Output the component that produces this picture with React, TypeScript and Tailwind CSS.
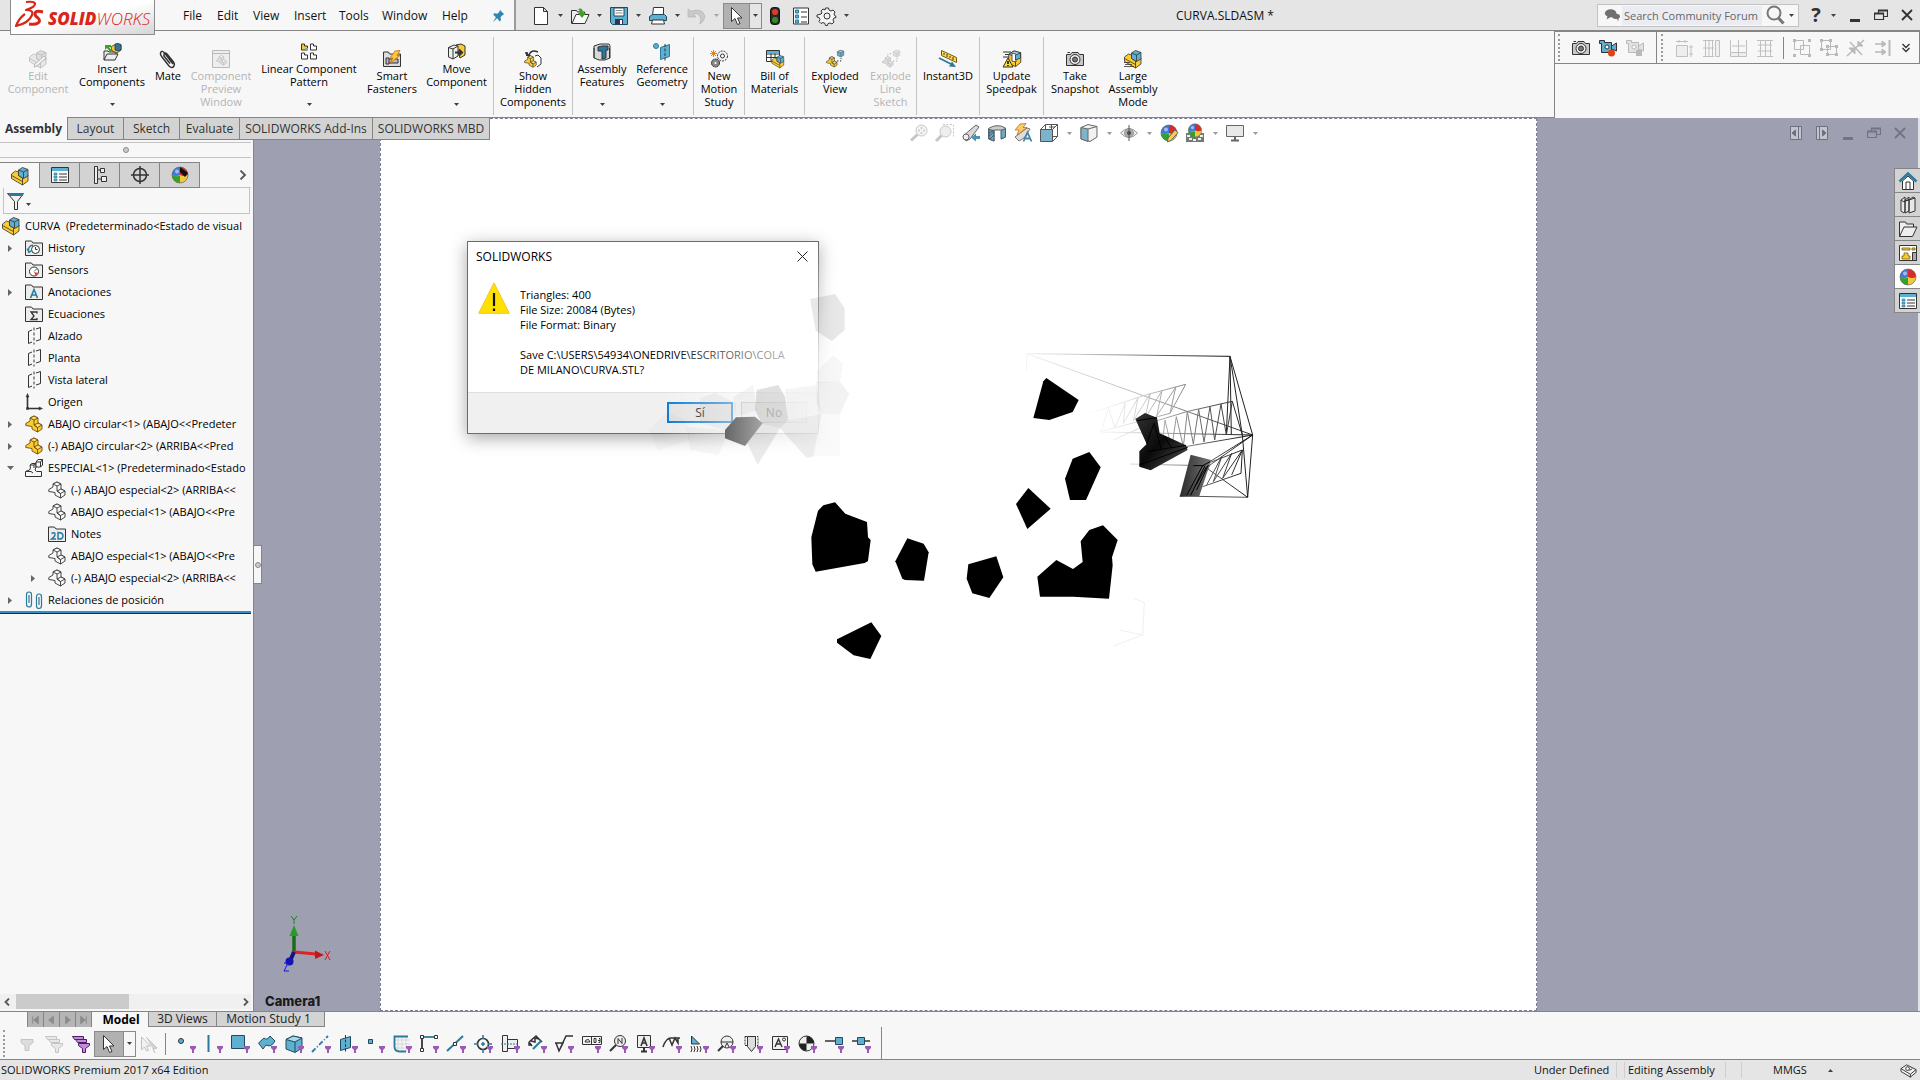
import type { ReactNode } from "react";

type IconProps = { name: string; className?: string };

const K = "#333333";
const B = "#2b7a9e";
const L = "#5fb0d0";
const Y = "#fbcb32";
const G = "#b9b9b9";

// Folder body shared by several tree icons
const folder = (
  <path d="M.5 16.500V2h6l1.500 2h9.500v12.500z" fill="#ededed" stroke={K} />
);

const partShape = (fill: string, light: string, stroke: string) => (
  <g stroke={stroke} strokeLinejoin="round" strokeWidth=".9">
    <path d="M.8 8.500L5 6V3l4-2 4 2v5l4 2v4l-4.500 3L7 14v-2.500L.8 10.500z" fill={fill} />
    <path d="M5 3l4 2 4-2L9 1zM9 10l4-2 4 2-4.500 2.500z" fill={light} />
    <path d="M9 5v5l3.500 2.500V17" fill="none" />
  </g>
);

const assemblyShape = (fill: string, cube: string, stroke: string) => (
  <g stroke={stroke} strokeLinejoin="round" strokeWidth=".8">
    <path d="M.5 7l4-3 3 1v3.500l4 2.500 5.500-3v6l-5.500 4L.5 11.500z" fill={fill} />
    <path d="M11.500 11v7M.5 8.500l11 6" fill="none" />
    <path d="M7.500 3l4-2.500 5.500 2V9l-4.500 2.500-5-3z" fill={cube} />
    <path d="M7.500 3l5 2 4.500-2.500M12.500 5v6.500" fill="none" />
  </g>
);

const cubeShape = (fill: string, light: string, stroke: string) => (
  <g stroke={stroke} strokeLinejoin="round">
    <path d="M1 4.500L8 1l9 2v10l-7 4.500L1 14z" fill={fill} />
    <path d="M1 4.500L10 7l7-4-9-2z" fill={light} />
    <path d="M10 7v10" />
  </g>
);

const cameraShape = (
  <g>
    <path d="M.5 4.500h4l1.500-2h6l1.500 2h4v11H.5z" fill="#c9c9c9" stroke={K} />
    <circle cx="9" cy="9.500" r="5" fill="#eee" stroke={K} />
    <circle cx="9" cy="9.500" r="2.500" fill="#777" stroke={K} />
    <path d="M1.500 2.500h2.500" stroke={K} />
  </g>
);

const ball = (
  <g>
    <circle cx="9" cy="9" r="8" fill="#f0c93c" />
    <path d="M9 9V1a8 8 0 0 0-8 8q4 2 8 0z" fill="#3f78dc" />
    <path d="M9 9V1a8 8 0 0 1 8 8q-4 2-8 0z" fill="#d92b2b" />
    <path d="M9 9.500V17a8 8 0 0 1-8-8q4 2 8 .5z" fill="#2ea32e" />
    <circle cx="9" cy="9" r="8" fill="none" stroke="#666" strokeWidth=".7" />
    <circle cx="6" cy="5.500" r="2" fill="#fff" opacity=".5" />
  </g>
);

const listShape = (
  <g>
    <path d="M.5 1.500h17v15H.5z" fill="#fff" stroke={K} />
    <path d="M1 2h16v3H1z" fill={L} />
    <path d="M3 7h3v2H3zM3 10h3v2H3zM3 13h3v2H3z" fill={L} stroke={B} strokeWidth=".6" />
    <path d="M8 8h8M8 11h8M8 14h8" stroke={K} />
  </g>
);

const cursorShape = (
  <path d="M3.500.5v14l3.500-3 2.500 6 2.500-1-2.500-5.500H14z" fill="#fff" stroke={K} strokeLinejoin="round" />
);

const videoShape = (body: string, stroke: string) => (
  <g stroke={stroke}>
    <path d="M.5 1.500h5v2h7v10h-10v-9h-2z" fill={body} />
    <path d="M12.500 7l5-3v8l-5-2z" fill={body} />
    <circle cx="8" cy="8" r="2" fill="#fff" />
  </g>
);

const funnelStack = (fill: string, stroke: string) => (
  <g fill={fill} stroke={stroke}>
    <path d="M.5 1.500h11v3h-9z" />
    <path d="M3.500 4.500h11v3h-9z" />
    <path d="M6.500 8.500h11v2l-4 3v4h-3v-4l-4-3z" />
  </g>
);

const icons: Record<string, ReactNode> = {
  newDoc: <path d="M2.500.5h9l4 4v13h-13zM11.500.5v4h4" fill="#fff" stroke={K} />,
  open: (
    <g>
      <path d="M.5 16.500V3.500h5l1 1.500h7v3" fill="#eee" stroke={K} />
      <path d="M1 16.500l4-9h13l-4 9z" fill="#fafafa" stroke={K} />
      <path d="M7 2q5-2 5 4h3l-4 5-4-5h2q0-3-2-4z" fill="#3fa31f" />
    </g>
  ),
  save: (
    <g>
      <path d="M.5.5h17v17h-15l-2-2z" fill={L} stroke="#1f4b60" />
      <path d="M4 1h10v8H4z" fill="#fff" stroke="#1f4b60" />
      <path d="M5.500 3.500h7M5.500 6h7" stroke="#888" />
      <path d="M5 12h8v5H5z" fill="#335" />
      <path d="M10 13h2v4h-2z" fill="#fff" />
    </g>
  ),
  print: (
    <g stroke={K}>
      <path d="M4.500.5h10v8h-11z" fill="#fff" />
      <path d="M.5 9.500l3-2h12l2 2v4H.5z" fill={L} stroke="#1f4b60" />
      <path d="M3.500 13h11l1 4h-13z" fill="#fff" />
    </g>
  ),
  undo: <path d="M0 2v8h8L5.500 7q8-2 7 8l-1 2q6-3 5-9Q14 1 3 4z" fill="#c9c9c9" stroke="#b0b0b0" strokeWidth=".6" />,
  cursor: cursorShape,
  traffic: (
    <g>
      <rect x="4.500" y=".5" width="9" height="17" rx="3" fill="#2b2b2b" stroke="#111" />
      <circle cx="9" cy="5" r="3" fill="#e23a24" />
      <circle cx="9" cy="13" r="3" fill="#2f8f22" />
    </g>
  ),
  options: (
    <g>
      <path d="M1.500 1h15v16h-15z" fill="#fff" stroke={K} />
      <path d="M3.500 3h3v3h-3zM3.500 8h3v3h-3zM3.500 13h3v3h-3z" fill={L} stroke={B} />
      <path d="M9 5h6M9 10h6M9 15h6" stroke={K} />
    </g>
  ),
  gear: (
    <g fill="#f4f4f4" stroke={K}>
      <path d="M7.500 1h3l.5 2 2 1 2-1 2 2-1 2 1 2 1 .5v1l-2 .5-1 2 1 2-2 2-2-1-2 .5-.5 2h-2l-.5-2-2-1-2 1-2-2 1-2-1-2-2-.5v-2L3 7l1-1-1-2 2-2 2 1z" />
      <circle cx="9" cy="9" r="3" />
    </g>
  ),
  editComp: (
    <g>
      {assemblyShape("#e8e8e8", "#ddd", G)}
      <path d="M6 14L15 6l2 2-9 8-3 1z" fill="#f3f3f3" stroke={G} />
    </g>
  ),
  insert: (
    <g>
      <path d="M1 17V8h4l1 1h7v2M1 17l3-6h11l-3 6z" fill="#eee" stroke={K} />
      <path d="M2 2h6v2H6l3 4-2 1-3-4-2 2z" fill="#3fa31f" />
      <path d="M8 4l3-2 4-1 3 1v5l-4 3-5-2z" fill={Y} stroke={K} strokeWidth=".8" />
      <path d="M12 1l3-.5 3 1V7l-3 1-3-1z" fill={B} stroke={K} strokeWidth=".8" />
    </g>
  ),
  mate: (
    <path
      d="M14 14L6 3.500Q3-.5 1.500 3 1 5 3 7l7 9q3 3 5 0 1-2-.5-4L8 4Q6 2 5 4l0 2 6 7.500"
      fill="none"
      stroke={K}
      strokeWidth="1.500"
    />
  ),
  preview: (
    <g stroke={G}>
      <path d="M.5.500h17v17H.5z" fill="#eee" />
      <path d="M.5 3.500h17" />
      <g transform="translate(4 5) scale(.6)">{partShape("#ddd", "#f5f5f5", G)}</g>
    </g>
  ),
  pattern: (
    <g stroke={K} fill="#fff">
      <path d="M1.500 1h3v2h3v4h-6z" fill={Y} />
      <path d="M10.500 1h3v2h3v4h-6zM1.500 10h3v2h3v4h-6zM10.500 10h3v2h3v4h-6z" />
      <path d="M5 5h3v2H5z" fill={L} stroke="none" />
    </g>
  ),
  smart: (
    <g>
      <path d="M.5 16.500V2h5l1 2h11v12.500z" fill="#ddd" stroke={K} />
      <path d="M3 8h3v6H3zM6 9h9v4H6" fill="#bbb" stroke={K} />
      <path d="M12 1l5-.5-3 5h3L7 13l3-5H7z" fill={Y} stroke="#d06a10" strokeWidth=".8" />
    </g>
  ),
  move: (
    <g stroke={K}>
      <path d="M8 2l5-1 4 2v9l-5 3z" fill={Y} />
      <path d="M.5 4.500L6 2l4 1v10l-5 3-4.500-2z" fill="#eee" />
      <path d="M.5 4.500L5 6l5-3M5 6v10" fill="none" />
      <path d="M7 9.500h6M11 6.500l3 3-3 3" strokeWidth="2" fill="none" />
    </g>
  ),
  showHidden: (
    <g>
      <path d="M1 3h3M14 2q-7-3-9 3" fill="none" stroke={K} strokeWidth="1.500" />
      <path d="M2 2v4h5z" fill={K} />
      <path d="M11 6l3-1 3 3v6l-4 3" fill="#fff" stroke={K} />
      <g transform="translate(0 5) scale(.72)">{partShape(Y, "#ffdf6e", K)}</g>
    </g>
  ),
  asmFeature: (
    <g stroke={K}>
      <path d="M1 3l6-2h9l1 2v12l-5 2H6l-5-2z" fill="#d8d8d8" />
      <path d="M5 4l4-1h6v4h-2v8l-4 1V8H5z" fill={B} />
      <path d="M1 5v10M16.500 5v10" />
    </g>
  ),
  refGeom: (
    <g>
      <circle cx="3" cy="3" r="2.500" fill={L} stroke={B} />
      <path d="M7.500 4.500l9-3v12l-9 3z" fill={L} stroke={B} />
      <path d="M12 1v17" stroke={K} strokeDasharray="3 1.500" />
    </g>
  ),
  motion: (
    <g>
      <path d="M3.500 0v7M0 3.500h7M1 1l5 5M6 1L1 6" stroke="#e0801e" />
      <circle cx="12.500" cy="6" r="5" fill="#f4f4f4" stroke={K} strokeDasharray="2 1" />
      <circle cx="12.500" cy="6" r="2" fill="#fff" stroke={K} />
      <circle cx="5.500" cy="13" r="4" fill="#888" stroke={K} strokeDasharray="2 .5" />
      <circle cx="5.500" cy="13" r="1" fill="#fff" />
    </g>
  ),
  bom: (
    <g>
      <path d="M.5.500h13v11H.5zM.5 4h13M.5 7.500h13M5 1v10M9 1v10" fill="#fff" stroke={K} />
      <path d="M1 1h12v2.500H1z" fill={L} />
      <g transform="translate(5.500 5) scale(.72)">{assemblyShape(Y, L, K)}</g>
    </g>
  ),
  exploded: (
    <g>
      <g transform="translate(0 6) scale(.65)">{partShape(Y, "#ffdf6e", K)}</g>
      <g transform="translate(11 0) scale(.4)">{cubeShape(L, "#a7d9ea", K)}</g>
      <path d="M11 11h4V8" fill="none" stroke={K} strokeDasharray="1.500 1.500" />
    </g>
  ),
  explodeLine: (
    <g>
      <g transform="translate(0 6) scale(.65)">{partShape("#ddd", "#eee", G)}</g>
      <g transform="translate(11 0) scale(.4)">{cubeShape("#ddd", "#eee", G)}</g>
      <path d="M11 11h4V8M5 5l5-2" fill="none" stroke={G} strokeDasharray="1.500 1.500" />
    </g>
  ),
  instant: (
    <g>
      <path d="M2.500.5l15 7v5l-15-7z" fill="#ffd94f" stroke="#7a5a10" />
      <path d="M5 3v2M8 4v3M11 6v2M14 7v3" stroke={K} />
      <path d="M0 8l12 6" stroke={B} strokeWidth="1.800" />
      <path d="M17 17l-7-.5 3-5z" fill={B} />
    </g>
  ),
  speedpak: (
    <g>
      <path d="M0 2h8M2 4.500h6M0 7h6M2 16.500h8" stroke={K} />
      <g transform="translate(5 0) scale(.75 .95)">{cubeShape(Y, "#a7d9ea", K)}</g>
      <path d="M9 3l4 1v8l-4-1z" fill="#fff" stroke={K} strokeWidth=".8" />
      <path d="M12.500 5l5-2v5l-5 2z" fill={L} stroke={K} strokeWidth=".8" />
      <path d="M5 8l5 9H0z" fill="#ffe02e" stroke={K} />
      <path d="M5 11v3M5 15v1" stroke="#000" strokeWidth="1.500" />
    </g>
  ),
  camera: cameraShape,
  largeAsm: (
    <g>
      {assemblyShape(Y, L, K)}
      <path d="M0 12.500h6M1 14.500h7M0 16.500h10" stroke={K} strokeWidth=".8" />
    </g>
  ),
  record: (
    <g>
      {videoShape(L, K)}
      <circle cx="12.500" cy="14" r="3.500" fill="#e2420f" />
    </g>
  ),
  stopRecord: (
    <g>
      {videoShape("#e2e2e2", G)}
      <path d="M10 11h6v6h-6z" fill={G} />
    </g>
  ),
  view1: <path d="M1.500 6.500h11v11h-11zM1 2.500h12M16 6v12M4 1v3M10 1v3M14 8h4M14 15h4" fill="#eee" stroke="#c0c0c0" />,
  view2: <path d="M13.500 1.500h4v16h-4zM1 1.500h11M1 17.500h11M3.500 1v17M7 1v17M10.500 1v17M1 9h11" fill="#eee" stroke="#c0c0c0" />,
  view3: <path d="M1.500 13.500h16v4h-16zM9.500 13v4M1.500 1v12M17.500 1v12M9.500 1v12M3 7h13" fill="#eee" stroke="#c0c0c0" />,
  view4: <path d="M1 1.500h16M1 17.500h16M4.500 1v17M9.500 1v17M14.500 1v17M2 6h14M2 12h14" fill="none" stroke="#c0c0c0" />,
  group1: (
    <g stroke={G} fill="none">
      <path d="M1.500 1.500h9v9h-9zM7.500 6.500h9v9h-9z" />
      <path d="M0 0h3v3H0zM15 0h3v3h-3zM0 15h3v3H0zM15 15h3v3h-3z" fill={G} stroke="none" />
    </g>
  ),
  group2: (
    <g stroke={G} fill="none">
      <path d="M1.500 1.500h9v9h-9zM7.500 7.500h9v8h-9z" />
      <path d="M0 0h3v3H0zM9 0h3v3H9zM0 9h3v3H0zM6 6h3v3H6zM15 6h3v3h-3zM6 14h3v3H6zM15 14h3v3h-3z" fill={G} stroke="none" />
    </g>
  ),
  slash: (
    <g stroke={G} fill={G}>
      <path d="M0 17L17 1M3 3l12 13" strokeWidth="1.500" />
      <path d="M11 2v5h5zM2 9h6v6z" />
    </g>
  ),
  rightAlign: (
    <g stroke={G} fill={G}>
      <path d="M15.500 1v16" strokeWidth="2" />
      <path d="M1 5h8M1 13h8" strokeWidth="1.500" />
      <path d="M8 2l4 3-4 3zM8 10l4 3-4 3z" />
    </g>
  ),
  zoomFit: (
    <g stroke="#c6c6c6" fill="none">
      <circle cx="11.500" cy="6.500" r="5.500" fill="#f4f4f4" />
      <path d="M7.500 10.500L1 16.500" strokeWidth="3" />
      <path d="M11.500 3v2M11.500 8v2M8 6.500h2M13 6.500h2" strokeWidth="1.500" />
    </g>
  ),
  zoomArea: (
    <g stroke="#c6c6c6" fill="none">
      <path d="M7 .5h10.500v12" strokeDasharray="2 1.500" />
      <circle cx="9.500" cy="7.500" r="5.500" fill="#eee" />
      <path d="M5.500 11.500L0 17" strokeWidth="3" />
    </g>
  ),
  prevView: (
    <g>
      <path d="M1 12L14 1l3 2-9 12-4 2z" fill="#d8d8d8" stroke="#666" />
      <circle cx="4" cy="13" r="3" fill="#eee" stroke="#666" />
      <path d="M9 13.500l5-4v2.500h4v3h-4v2.500z" fill="#4a93b4" />
    </g>
  ),
  section: (
    <g>
      <path d="M.5 4.500Q9-1 17.500 4v9l-4 2V6H6v11l-5.500-2z" fill="#ccc" stroke="#666" />
      <path d="M1 5.500l5 1V17l-5-2zM13 6.500l4.500-2V13L13 15z" fill="#6fa8c0" stroke="#45606c" />
      <path d="M1 9l4-2M1 12l5-4M2 15l4-4" stroke="#345" strokeWidth=".8" />
    </g>
  ),
  annotView: (
    <g>
      <path d="M1 13L13 4l3 1-6 9-5 3z" fill="#ddd" stroke="#777" />
      <path d="M6 0l6-.5-3 4h4L3 11l2-5H1z" fill="#f7cf63" stroke="#c86a30" strokeWidth=".8" />
      <path d="M9.500 17.500l4-9 4 9M11 14.500h5" fill="none" stroke="#4a86a4" strokeWidth="1.800" />
    </g>
  ),
  orient: (
    <g stroke="#555" fill="none">
      <path d="M5.500.5h12v12h-12zM.5 5.500l5-5M12.500 5.500l5-5M12.500 17.500l5-5M11.500.5v5M9 3h6" />
      <path d="M.5 5.500h12v12H.5z" fill="#7db4cb" />
    </g>
  ),
  displayStyle: (
    <g stroke="#666" strokeLinejoin="round">
      <path d="M1 3.500L8 .5l9 2V13l-7 4.500L1 15z" fill="#f1f1f1" />
      <path d="M1 3.500L8 5v12.500L1 15z" fill="#7db4cb" />
      <path d="M8 5l9-2.500" fill="none" />
    </g>
  ),
  eye: (
    <g stroke="#9a9a9a">
      <path d="M.5 9Q9 0 17.500 9 9 18 .5 9z" fill="#f1f1f1" />
      <circle cx="9" cy="9" r="4.500" fill="#aaa" />
      <circle cx="9" cy="9" r="2" fill="#444" stroke="none" />
      <path d="M9 1v16" stroke="#555" />
    </g>
  ),
  ball,
  editBall: (
    <g>
      {ball}
      <path d="M8 14l7-8 3 2.500-7 8L7.500 18z" fill="#f5cf55" stroke="#666" />
    </g>
  ),
  scene: (
    <g>
      <path d="M0 9h18v9H0z" fill="#777" />
      <path d="M1 11h3v2H1zM7 15h3v2H7zM14 11h3v2h-3zM3 14h3v2H3zM12 14h3v2h-3z" fill="#eee" />
      <g transform="translate(1.500 -1) scale(.83)">{ball}</g>
    </g>
  ),
  monitor: (
    <g stroke="#666">
      <path d="M.5 1.500h17v11H.5z" fill="#e8e8e8" />
      <path d="M9 13v3M5 16.500h8" strokeWidth="2" />
    </g>
  ),
  assembly: assemblyShape(Y, L, K),
  part: partShape(Y, "#ffdc62", "#6b4e10"),
  partGhost: partShape("#f7f7f7", "#fff", K),
  asmGhost: (
    <g stroke={K} fill="#f7f7f7" strokeLinejoin="round">
      <path d="M.5 17.500v-5l4-1.500 1-2-.5-3 2-1.500h4v3.500l-1 3 1.500 1.500h5v5z" />
      <path d="M1 12.500h5l2 1.500M5 6h4l2-1.500M9 6v3" fill="none" />
      <path d="M11 3l2-2.500h4.500V6l-2 2h-4.500zM11 3h4.500V8M15.500 3l2-2.500" />
    </g>
  ),
  list: listShape,
  config: (
    <g stroke={K} fill="#eee">
      <path d="M3.500.5v17h3v-17zM7 4h3M7 13h3" />
      <path d="M9.500 2.500h4v4h-4zM10.500 10.500h5v5h-5z" />
    </g>
  ),
  target: (
    <g stroke={K} fill="none" strokeWidth="1.500">
      <circle cx="9" cy="9" r="6.500" />
      <path d="M9 0v18M0 9h18" />
    </g>
  ),
  displayMgr: (
    <g>
      {ball}
      <path d="M9 1l8 6-3 4-5-5z" fill="#111" />
    </g>
  ),
  filter: (
    <g>
      <path d="M.5 1.500h16l-6 8v8h-3v-8z" fill="#f2f2f2" stroke={K} />
      <path d="M1 1h15v3H3z" fill={B} />
    </g>
  ),
  history: (
    <g>
      {folder}
      <circle cx="10.500" cy="10.500" r="4" fill="#fff" stroke={K} />
      <path d="M10.500 8v2.500h2" fill="none" stroke={K} />
      <path d="M4 14Q2 7 8 6M2 9.500l2 4 3-2.500" fill="none" stroke={B} strokeWidth="1.300" />
    </g>
  ),
  sensors: (
    <g>
      {folder}
      <circle cx="9" cy="10.500" r="4.500" fill="#fff" stroke={K} />
      <path d="M9 10.500l3-3" stroke="#2b7a9e" />
      <path d="M9 11l4 1-2 3z" fill="#e23a24" />
    </g>
  ),
  annotations: (
    <g>
      {folder}
      <path d="M5.500 15L9 6.500l3.500 8.500M7 12h4.500" fill="none" stroke={B} strokeWidth="1.600" />
    </g>
  ),
  equations: (
    <g>
      {folder}
      <path d="M12 8.500V7H6l3 4-3 3.500h6V13" fill="none" stroke={K} strokeWidth="1.300" />
    </g>
  ),
  notes2d: (
    <g>
      {folder}
      <path d="M3.500 8.500q3.500-2 3.500 1 0 2-3.500 4.500H8M10 7.500V14q5 .5 5-3t-5-3.500z" fill="none" stroke={B} strokeWidth="1.500" />
    </g>
  ),
  plane: (
    <g fill="none" stroke={K}>
      <path d="M7 3l-3.500 1.500v12L7 15M11 2l4.500-1.500v12L11 14" />
      <path d="M9 .5v17" strokeDasharray="3 2" />
    </g>
  ),
  origin: (
    <g stroke={K} strokeWidth="1.600" fill={K}>
      <path d="M2.500 4v11.500H15" fill="none" />
      <path d="M2.500.5L4 4H1zM17.500 15.500L14 14v3zM1.500 14.500h2v2h-2z" strokeWidth=".5" />
    </g>
  ),
  mates: (
    <g fill="none" stroke={B} strokeWidth="1.200">
      <path d="M1.500 4v9q0 3 2.500 3t2.500-3V4Q6.500 1 4 1T1.500 4zM4 4v8M11.500 6v9q0 2.500 2.500 2.500t2.500-3V6q0-3-2.500-3t-2.500 3zM14 6v8" />
    </g>
  ),
  home: (
    <g>
      <path d="M3.500 9v8.500h11V9L9 4z" fill="#fff" stroke={K} />
      <path d="M.5 9.500L9 1.500l8.500 8" fill="none" stroke={B} strokeWidth="2.500" />
      <path d="M7 17v-7h4v7" fill="none" stroke={K} />
    </g>
  ),
  library: (
    <g fill="#e8e8e8" stroke={K} strokeLinejoin="round">
      <path d="M2 4l4-3v14l-1 2-3-2zM6 4l4-3v14l-4 2zM10 4l4-3 2 1v13l-6 2z" />
      <path d="M2 4l3 2 5-3M6 5l4-1 6-2" fill="none" />
    </g>
  ),
  explorer: <path d="M.5 16.500V2h6l1 2h7v3M.5 16.500L5 7h13l-4.500 9.500z" fill="#eee" stroke={K} />,
  palette: (
    <g>
      <path d="M.5 1.500h17v15H.5z" fill="#fff" stroke={K} />
      <path d="M3 4h8v2H3zM13 4h3v2h-3zM3 12h2V9h4v3h2v3H3z" fill={Y} stroke="#7a5a10" strokeWidth=".8" />
      <path d="M13.500 8.500h4v8h-4z" fill="#aaa" stroke={K} />
    </g>
  ),
  filterOne: <path d="M3 4.500h12v3l-4 3v5H7v-5l-4-3z" fill="#ddd" stroke="#c4c4c4" />,
  filterMany: funnelStack("#e8e8e8", "#c4c4c4"),
  filterActive: funnelStack("#c58ae0", "#4c2060"),
  cursorStack: (
    <g fill="#d2d2d2" stroke="#c0c0c0">
      <path d="M6 2l11 11-4 1 2 4" />
      <path d="M1.500 2v13l3-3 2 4 2-1-2-4h4z" fill="#f2f2f2" />
    </g>
  ),
  point: <circle cx="4" cy="6" r="2.500" fill={L} stroke={K} />,
  edge: <path d="M4.500 0v17" stroke={B} strokeWidth="2" />,
  face: <path d="M.5.500h13v13H.5z" fill={L} stroke="#1f4b60" />,
  surface: <path d="M.5 8L6 3q3 3 6-2l5 5q-4 7-9 4l-3 4z" fill={L} stroke="#1f4b60" />,
  solid: cubeShape(L, "#a7d9ea", "#1f4b60"),
  axis: <path d="M0 17L16 1" stroke={B} strokeWidth="1.800" strokeDasharray="5 2 1 2" />,
  refPlane: (
    <g>
      <path d="M1.500 4.500l10-3v11l-10 3z" fill={L} stroke="#1f4b60" />
      <path d="M6.500 0v18" stroke={K} strokeDasharray="3 1.500" />
    </g>
  ),
  sketchPoint: <path d="M2.500 4.500h4v4h-4z" fill={L} stroke="#1f4b60" />,
  sketch: (
    <g fill="none">
      <path d="M5 1v16M9 1v16M13 1v16M1 5h16M1 9h16M1 13h16" stroke="#d5d5d5" />
      <path d="M15 1.500H1.500v10q0 5 5 5H13" stroke={B} strokeWidth="1.800" />
    </g>
  ),
  segment: (
    <g fill="#fff" stroke={K}>
      <path d="M2 2v14" strokeWidth="1.800" />
      <path d="M2 2h14" stroke={B} strokeWidth="1.800" />
      <path d="M.5.500h3v3h-3zM14.500.500h3v3h-3zM.5 13.500h3v3h-3z" />
    </g>
  ),
  midpoint: (
    <g>
      <path d="M0 16L16 1" stroke={B} strokeWidth="2" />
      <path d="M6.500 7.500h3v3h-3z" fill="#fff" stroke={K} />
    </g>
  ),
  centermark: (
    <g fill="none" stroke={B} strokeWidth="1.600">
      <circle cx="9" cy="9" r="5.500" stroke={K} />
      <path d="M9 0v4M9 14v4M0 9h4M14 9h4M7 9h4M9 7v4" />
    </g>
  ),
  centerline: (
    <g fill="#eee" stroke={K}>
      <path d="M1.500.5h5v16h-5zM6.500 4.500h10v9h-10z" />
      <path d="M0 9h18" stroke={B} strokeDasharray="2 1" />
    </g>
  ),
  dimension: (
    <g fill="none" stroke={K} strokeWidth="1.500">
      <path d="M1 7l7-6 6 6M1 7l3 4M3 6l4 1 0-4 4 1M1 7v3h3" />
      <path d="M5 14l8-8" stroke={B} strokeWidth="2" />
    </g>
  ),
  finish: <path d="M0 8h8L4 16 1 8M4 16L11 1h7" fill="none" stroke={K} strokeWidth="1.500" />,
  geoTol: (
    <g fill="none" stroke={K}>
      <path d="M.5 1.500h19v8H.5zM9.500 1v9M3 7h5q-1-4-4-2zM12 3.500h2v4h-2zM17 3.500h1v4h-1.500M16 5.500h2" />
    </g>
  ),
  balloon: (
    <g fill="none" stroke={K}>
      <circle cx="11" cy="6" r="5.500" fill="#eee" />
      <path d="M9 9V3.500l4 5V3" />
      <path d="M7 10l-6 6" strokeWidth="2" />
    </g>
  ),
  datum: (
    <g fill="none" stroke={K}>
      <path d="M1.500.5h13v12h-13z" fill="#eee" />
      <path d="M5 11l3-8 3 8M6 8h4" strokeWidth="1.600" />
      <path d="M8 13v3M5 16.500h6" strokeWidth="2" />
    </g>
  ),
  weld: <path d="M0 12Q3 3 8 3h9M6 3l3 7 3-7 3 5V3" fill="none" stroke={K} strokeWidth="1.500" />,
  weldBead: (
    <g fill="none" stroke={K}>
      <path d="M1.500 1v8h8z" fill={L} />
      <path d="M1 11q2 3 0 6M4 11q2 3 0 6M7 11q2 3 0 6M10 11q2 3 0 6" />
    </g>
  ),
  datumTarget: (
    <g fill="none" stroke={K}>
      <circle cx="10" cy="7" r="6" fill="#eee" />
      <path d="M4 7h12M8 12l2-4 2 4" />
      <path d="M6 11l-5 5" strokeWidth="2" />
    </g>
  ),
  thread: (
    <g fill="#ddd" stroke={K}>
      <path d="M1 1.500h13v9H1z" strokeDasharray="2 1" fill="none" />
      <path d="M3.500 1.500h8v10l-4 5-4-5z" />
    </g>
  ),
  block: (
    <g fill="none" stroke={K}>
      <path d="M1.500 1.500h15v13h-15z" fill="#f2f2f2" />
      <path d="M4 12l3.500-8 3.500 8M5.500 9h4" strokeWidth="1.400" />
      <circle cx="13" cy="4.500" r="1.500" />
    </g>
  ),
  gravity: (
    <g>
      <circle cx="8.500" cy="8.500" r="7.500" fill="#eee" stroke={K} />
      <path d="M8.500 8.500V1a7.500 7.500 0 0 1 7.500 7.500zM8.500 8.500V16A7.500 7.500 0 0 1 1 8.500z" fill="#222" />
    </g>
  ),
  routeEnd: (
    <g>
      <path d="M0 6h11" stroke={K} strokeWidth="1.500" />
      <path d="M10.500 2.500h7v7h-7z" fill={L} stroke="#1f4b60" />
    </g>
  ),
  routeMid: (
    <g>
      <path d="M0 6h18" stroke={K} strokeWidth="1.500" />
      <path d="M5.500 2.500h7v7h-7z" fill={L} stroke="#1f4b60" />
    </g>
  ),
  dockLeft: (
    <g fill="#c4c4ce" stroke="#6f6f80">
      <path d="M3.500 2.500h11v13h-11zM11.500 2.500v13" />
      <path d="M8.500 6v6L5 9z" fill="#6f6f80" />
    </g>
  ),
  dockRight: (
    <g fill="#c4c4ce" stroke="#6f6f80">
      <path d="M3.500 2.500h11v13h-11zM6.500 2.500v13" />
      <path d="M9.500 6v6L13 9z" fill="#6f6f80" />
    </g>
  ),
  chat: (
    <g fill="#707070">
      <ellipse cx="7.500" cy="7" rx="6.500" ry="4.500" />
      <path d="M4 10l-1 4 5-3z" />
      <ellipse cx="13.500" cy="10.500" rx="4.500" ry="3" />
      <path d="M14 12l2 4 .5-4z" />
    </g>
  ),
  magnifier: (
    <g fill="none" stroke="#777">
      <circle cx="8" cy="7" r="6.500" strokeWidth="2" />
      <path d="M12.500 12l5 5.500" strokeWidth="3" />
    </g>
  ),
  pin: <path d="M10 1l6 6-2 .5-3 3 .5 4L10 16l-3.500-4L1 17l4-6.500L1.500 7 3 5.500l4 .5 3-3z" fill="#2f86b0" />,
  tag: (
    <g fill="#f2f2f2" stroke={K} strokeLinejoin="round">
      <path d="M1 7l6-4 10 5v3l-6 5L1 10z" />
      <path d="M1 7l10 6 6-5M11 13v3" fill="none" />
      <circle cx="8" cy="7" r="2" />
      <path d="M10 9l3-2" />
    </g>
  ),
};

function Icon({ name, className = "size-[18px]" }: IconProps) {
  return (
    <svg viewBox="0 0 18 18" className={`shrink-0 overflow-visible ${className}`} aria-hidden="true">
      {icons[name]}
    </svg>
  );
}

function Caret({ className = "text-[#404040]" }: { className?: string }) {
  return (
    <svg viewBox="0 0 5 3" className={`h-[3px] w-[5px] shrink-0 ${className}`} aria-hidden="true">
      <path d="M0 0h5L2.500 3z" fill="currentColor" />
    </svg>
  );
}

const menus = [
  { label: "File", width: "w-[34px]" },
  { label: "Edit", width: "w-[36px]" },
  { label: "View", width: "w-[41px]" },
  { label: "Insert", width: "w-[45px]" },
  { label: "Tools", width: "w-[43px]" },
  { label: "Window", width: "w-[60px]" },
  { label: "Help", width: "w-[50px]" },
];

function WindowButtons() {
  return (
    <div className="flex items-center gap-3">
      <button aria-label="Minimize" className="flex h-[14px] w-[14px] items-end justify-center">
        <span className="h-[3px] w-[10px] bg-current" />
      </button>
      <button aria-label="Restore">
        <svg viewBox="0 0 14 14" className="size-[14px]" fill="none" stroke="currentColor">
          <path d="M4.500 5V2.500h9v6H10M.5 5.500h9v6h-9z" strokeWidth="1.200" />
          <path d="M4 2.500h10M0 5.500h10" strokeWidth="2" />
        </svg>
      </button>
      <button aria-label="Close">
        <svg viewBox="0 0 14 14" className="size-[14px]" fill="none" stroke="currentColor" strokeWidth="1.800">
          <path d="M2 2l10 10M12 2L2 12" />
        </svg>
      </button>
    </div>
  );
}

function Logo() {
  return (
    <div className="z-10 ml-[10px] flex h-[35px] w-[145px] shrink-0 self-start items-center border border-t-0 border-[#8c8c8c] bg-gradient-to-br from-white via-white to-[#d5d5d5]">
      <svg viewBox="0 0 143 34" className="h-[34px] w-[143px]" role="img" aria-label="SOLIDWORKS">
        <g fill="none" stroke="#d9261c" strokeWidth="2.200" strokeLinejoin="round">
          <path d="M15 2q9-1 9 2 0 3-9 6 8 0 6 5-3 8-16 11 3-8 9-12" />
          <path d="M32 12q-8-2-8 2 0 2 3 4 3 3 0 5-3 2-9 1" strokeWidth="3" />
        </g>
        <text x="37" y="25" fill="#d9261c" fontFamily="Open Sans, sans-serif" fontSize="17" fontStyle="italic">
          <tspan fontWeight="800">SOLID</tspan>
          <tspan fontWeight="300">WORKS</tspan>
        </text>
      </svg>
    </div>
  );
}

function TitleBar() {
  const quick = ["newDoc", "open", "save", "print", "undo"];
  return (
    <header className="flex h-[31px] shrink-0 items-center border-b border-[#858585] bg-[#e5e5e5]">
      <Logo />
      <nav className="flex h-[30px] items-center border-r-2 border-[#9a9a9a] bg-[#f7f7f7] pt-px pl-7">
        {menus.map((menu) => (
          <a key={menu.label} href="#" className={menu.width}>
            {menu.label}
          </a>
        ))}
        <button aria-label="Pin menu" className="mr-2">
          <Icon name="pin" className="size-[14px]" />
        </button>
      </nav>
      <div className="flex items-center pt-px pl-4">
        {quick.map((name) => (
          <div key={name} className="flex w-[39px] items-center gap-[8px]">
            <button aria-label={name}>
              <Icon name={name} />
            </button>
            <Caret className={name === "undo" ? "text-[#a5a5a5]" : "text-[#404040]"} />
          </div>
        ))}
        <div className="-ml-1 flex h-[26px] border border-[#8a8a8a]">
          <button aria-label="Select" className="flex w-[25px] items-center justify-center bg-[#b1b1b1]">
            <Icon name="cursor" />
          </button>
          <button aria-label="Select options" className="flex w-[12px] items-center justify-center border-l border-[#8a8a8a]">
            <Caret />
          </button>
        </div>
        <div className="ml-1 flex items-center gap-2">
          <button aria-label="Rebuild"><Icon name="traffic" /></button>
          <button aria-label="File properties"><Icon name="options" /></button>
          <button aria-label="Options"><Icon name="gear" /></button>
          <Caret />
        </div>
      </div>
      <h1 className="flex-1 pt-px pl-1 text-center">CURVA.SLDASM *</h1>
      <div className="flex h-[23px] w-[202px] items-center border border-[#c2c2c2] bg-[#f7f7f7] pl-[6px]">
        <Icon name="chat" className="size-[16px]" />
        <input
          aria-label="Search Community Forum"
          placeholder="Search Community Forum"
          className="ml-[2px] h-[19px] w-[140px] bg-[#ebecf1] pl-[2px] text-[11px] outline-none placeholder:text-[#666]"
        />
        <button aria-label="Search" className="ml-1">
          <Icon name="magnifier" />
        </button>
        <span className="ml-[5px]">
          <Caret />
        </span>
      </div>
      <button aria-label="Help" className="ml-[10px] w-[14px] text-[20px] leading-[22px] font-bold text-[#333]">
        ?
      </button>
      <span className="mr-[12px] ml-2">
        <Caret />
      </span>
      <div className="mr-[6px] text-[#333]">
        <WindowButtons />
      </div>
    </header>
  );
}

type RibbonItem = {
  label: string;
  icon: string;
  width: string;
  drop?: boolean;
  off?: boolean;
};

const ribbon: RibbonItem[][] = [
  [
    { label: "Edit\nComponent", icon: "editComp", width: "w-[76px]", off: true },
    { label: "Insert\nComponents", icon: "insert", width: "w-[72px]", drop: true },
    { label: "Mate", icon: "mate", width: "w-[40px]" },
    { label: "Component\nPreview\nWindow", icon: "preview", width: "w-[66px]", off: true },
    { label: "Linear Component\nPattern", icon: "pattern", width: "w-[110px]", drop: true },
    { label: "Smart\nFasteners", icon: "smart", width: "w-[56px]" },
    { label: "Move\nComponent", icon: "move", width: "w-[73px]", drop: true },
  ],
  [{ label: "Show\nHidden\nComponents", icon: "showHidden", width: "w-[78px]" }],
  [
    { label: "Assembly\nFeatures", icon: "asmFeature", width: "w-[58px]", drop: true },
    { label: "Reference\nGeometry", icon: "refGeom", width: "w-[62px]", drop: true },
  ],
  [{ label: "New\nMotion\nStudy", icon: "motion", width: "w-[50px]" }],
  [{ label: "Bill of\nMaterials", icon: "bom", width: "w-[59px]" }],
  [
    { label: "Exploded\nView", icon: "exploded", width: "w-[60px]" },
    { label: "Explode\nLine\nSketch", icon: "explodeLine", width: "w-[51px]", off: true },
  ],
  [{ label: "Instant3D", icon: "instant", width: "w-[62px]" }],
  [{ label: "Update\nSpeedpak", icon: "speedpak", width: "w-[63px]" }],
  [
    { label: "Take\nSnapshot", icon: "camera", width: "w-[62px]" },
    { label: "Large\nAssembly\nMode", icon: "largeAsm", width: "w-[54px]" },
  ],
];

function RibbonButton({ item }: { item: RibbonItem }) {
  return (
    <button
      disabled={item.off}
      className={`flex h-[78px] shrink-0 flex-col items-center text-[11px] leading-[13px] ${item.width} ${
        item.drop ? "pt-[6px]" : "pt-[13px]"
      } ${item.off ? "text-[#b4b4b4]" : "text-black"}`}
    >
      <Icon name={item.icon} />
      <span className="mt-px text-center whitespace-pre">{item.label}</span>
      {item.drop && (
        <span className="mt-auto flex pb-[9px]">
          <Caret />
        </span>
      )}
    </button>
  );
}

function Grip() {
  return <span className="h-[27px] w-[3px] shrink-0 border-l-2 border-dotted border-[#9a9a9a]" />;
}

const viewTools = ["view1", "view2", "view3", "view4"];
const blockTools = ["group1", "group2", "slash", "rightAlign"];

function Ribbon() {
  return (
    <div className="flex h-[87px] shrink-0 bg-[#f7f7f7]">
      <div className="flex min-w-0 flex-1 border-r border-b border-[#858585] pt-[6px]">
        {ribbon.map((group, i) => (
          <div key={i} className="flex h-[78px] border-r border-[#c3c3c3] last:border-r-0">
            {group.map((item) => (
              <RibbonButton key={item.icon} item={item} />
            ))}
          </div>
        ))}
      </div>
      <div className="w-[365px] shrink-0">
        <div className="flex h-[33px] border-y border-r border-[#858585]">
          <div className="flex w-[102px] items-center gap-[9px] border-r border-[#858585] pl-[3px]">
            <span className="mr-[2px] flex">
              <Grip />
            </span>
            {["camera", "record", "stopRecord"].map((name) => (
              <button key={name} aria-label={name}>
                <Icon name={name} />
              </button>
            ))}
          </div>
          <div className="flex flex-1 items-center gap-[9px] pl-1">
            <span className="mr-[2px] flex">
              <Grip />
            </span>
            {viewTools.map((name) => (
              <button key={name} aria-label={name}>
                <Icon name={name} />
              </button>
            ))}
            <span className="h-[22px] w-px bg-[#858585]" />
            {blockTools.map((name) => (
              <button key={name} aria-label={name}>
                <Icon name={name} />
              </button>
            ))}
            <button aria-label="More tools">
              <svg viewBox="0 0 10 10" className="size-[10px]" fill="none" stroke="#333" strokeWidth="1.300">
                <path d="M1.500 1L5 4.500 8.500 1M1.500 5L5 8.500 8.500 5" />
              </svg>
            </button>
          </div>
        </div>
      </div>
    </div>
  );
}

const commandTabs = [
  { label: "Layout", width: "w-[56px]" },
  { label: "Sketch", width: "w-[56px]" },
  { label: "Evaluate", width: "w-[60px]" },
  { label: "SOLIDWORKS Add-Ins", width: "w-[133px]" },
  { label: "SOLIDWORKS MBD", width: "w-[118px]" },
];

function CommandTabs() {
  return (
    <div role="tablist" className="z-10 col-span-2 col-start-1 row-start-1 -mt-px flex h-[23px] w-max bg-[#f7f7f7] whitespace-nowrap text-[#333]">
      <button role="tab" aria-selected="true" className="w-[67px] font-bold">
        Assembly
      </button>
      {commandTabs.map((tab) => (
        <button
          key={tab.label}
          role="tab"
          aria-selected="false"
          className={`border border-r-0 border-[#858585] bg-[#d3d3d3] last:border-r ${tab.width}`}
        >
          {tab.label}
        </button>
      ))}
    </div>
  );
}

type TreeRow = { icon: string; text: string; level: 0 | 1 | 2; arrow?: "right" | "down" };

const tree: TreeRow[] = [
  { icon: "assembly", text: "CURVA  (Predeterminado<Estado de visual", level: 0 },
  { icon: "history", text: "History", level: 1, arrow: "right" },
  { icon: "sensors", text: "Sensors", level: 1 },
  { icon: "annotations", text: "Anotaciones", level: 1, arrow: "right" },
  { icon: "equations", text: "Ecuaciones", level: 1 },
  { icon: "plane", text: "Alzado", level: 1 },
  { icon: "plane", text: "Planta", level: 1 },
  { icon: "plane", text: "Vista lateral", level: 1 },
  { icon: "origin", text: "Origen", level: 1 },
  { icon: "part", text: "ABAJO circular<1> (ABAJO<<Predeter", level: 1, arrow: "right" },
  { icon: "part", text: "(-) ABAJO circular<2> (ARRIBA<<Pred", level: 1, arrow: "right" },
  { icon: "asmGhost", text: "ESPECIAL<1> (Predeterminado<Estado", level: 1, arrow: "down" },
  { icon: "partGhost", text: "(-) ABAJO especial<2> (ARRIBA<<", level: 2 },
  { icon: "partGhost", text: "ABAJO especial<1> (ABAJO<<Pre", level: 2 },
  { icon: "notes2d", text: "Notes", level: 2 },
  { icon: "partGhost", text: "ABAJO especial<1> (ABAJO<<Pre", level: 2 },
  { icon: "partGhost", text: "(-) ABAJO especial<2> (ARRIBA<<", level: 2, arrow: "right" },
  { icon: "mates", text: "Relaciones de posición", level: 1, arrow: "right" },
];

const indent = { 0: "pl-[2px]", 1: "pl-[7px]", 2: "pl-[30px]" };

function FeatureTree() {
  return (
    <div className="mr-[2px] overflow-hidden border-b border-[#1a12b0]">
      <ul className="border-b-2 border-[#3390c4] pt-px text-[11px] text-black">
        {tree.map((row, i) => (
          <li key={i} className={`flex h-[22px] items-center whitespace-pre ${indent[row.level]}`}>
            {row.level > 0 && (
              <span className="w-[18px] shrink-0 text-[#666]">
                {row.arrow && (
                  <svg viewBox="0 0 7 7" className="size-[7px]" fill="currentColor">
                    <path d={row.arrow === "right" ? "M1 0l4 3.500L1 7z" : "M0 1h7L3.500 5z"} />
                  </svg>
                )}
              </span>
            )}
            <Icon name={row.icon} />
            <span className="ml-[5px]">{row.text}</span>
          </li>
        ))}
      </ul>
    </div>
  );
}

function SidePanel() {
  return (
    <aside className="col-start-1 row-start-2 flex min-h-0 min-w-0 flex-col border-r border-[#858585] bg-[#f7f7f7]">
      <div className="mt-[2px] mr-[2px] flex h-[16px] shrink-0 items-center justify-center border-y border-[#c3c3c3]">
        <span className="size-[6px] rounded-full border border-[#888] bg-[#ccc]" />
      </div>
      <div className="mt-1 flex h-[26px] shrink-0">
        {["assembly", "list", "config", "target", "displayMgr"].map((name, i) => (
          <button
            key={name}
            aria-label={name}
            className={`flex w-[40px] items-center justify-center border-t border-r border-[#858585] ${
              i === 0 ? "bg-[#f7f7f7]" : "border-b bg-[#d3d3d3]"
            }`}
          >
            <Icon name={name} />
          </button>
        ))}
        <button aria-label="More tabs" className="mr-[2px] flex flex-1 items-center justify-end border-b border-[#c3c3c3] pr-1">
          <svg viewBox="0 0 8 10" className="h-[10px] w-[8px]" fill="none" stroke="#555" strokeWidth="1.800">
            <path d="M1.500 .5L6 5 1.500 9.500" />
          </svg>
        </button>
      </div>
      <div className="mr-[3px] ml-[3px] flex h-[26px] shrink-0 items-center border border-t-0 border-[#c3c3c3] pl-[3px]">
        <Icon name="filter" />
        <span className="mt-2 ml-px">
          <Caret />
        </span>
        <input aria-label="Filter tree" className="h-5 min-w-0 flex-1 bg-transparent pl-1 outline-none" />
      </div>
      <FeatureTree />
      <div className="mt-auto mr-[2px] mb-[2px] flex h-[15px] shrink-0 items-center bg-[#f0f0f0] text-[#555]">
        <button aria-label="Scroll left" className="w-[16px] pl-1">
          <svg viewBox="0 0 6 8" className="h-[8px] w-[6px]" fill="none" stroke="currentColor" strokeWidth="1.800">
            <path d="M5 .5L1.500 4 5 7.500" />
          </svg>
        </button>
        <span className="h-full w-[113px] bg-[#cbcbcb]" />
        <button aria-label="Scroll right" className="ml-auto w-[8px]">
          <svg viewBox="0 0 6 8" className="h-[8px] w-[6px]" fill="none" stroke="currentColor" strokeWidth="1.800">
            <path d="M1 .5L4.500 4 1 7.500" />
          </svg>
        </button>
      </div>
    </aside>
  );
}

const solids = [
  "799,114 896,180 878,216 808,240 760,234 790,124",
  "928,336 962,382 918,480 870,480 855,416 878,356",
  "745,444 812,506 742,567 708,492",
  "165,487 196,521 261,546 264,592 272,600 264,663 254,669 107,695 97,673 94,592 114,512 130,496",
  "382,595 431,611 446,637 432,722 375,720 367,716 346,664",
  "649,649 670,712 628,774 577,760 560,716 565,673",
  "969,556 1013,600 996,652 998,676 987,776 879,770 780,770 772,710 829,660 879,687 908,666 902,604 928,570",
  "274,847 304,888 271,957 221,946 171,908 171,898",
];

// Model space is three units to the pixel
function Model() {
  return (
    <svg viewBox="0 0 1500 990" className="pointer-events-none absolute top-[221px] left-[399px] h-[330px] w-[500px]" aria-hidden="true">
      <defs>
        <linearGradient id="wire" gradientUnits="userSpaceOnUse" x1="920" y1="0" x2="1400" y2="0">
          <stop offset="0" stopColor="#fff" />
          <stop offset=".25" stopColor="#e4e4e4" />
          <stop offset=".55" stopColor="#999" />
          <stop offset="1" stopColor="#1a1a1a" />
        </linearGradient>
        <linearGradient id="frame" gradientUnits="userSpaceOnUse" x1="740" y1="0" x2="1350" y2="0">
          <stop offset="0" stopColor="#f0f0f0" />
          <stop offset=".25" stopColor="#ccc" />
          <stop offset="1" stopColor="#111" />
        </linearGradient>
        <linearGradient id="diagonal" gradientUnits="userSpaceOnUse" x1="740" y1="0" x2="1418" y2="0">
          <stop offset="0" stopColor="#f2f2f2" />
          <stop offset=".5" stopColor="#bbb" />
          <stop offset="1" stopColor="#222" />
        </linearGradient>
        <linearGradient id="slab" x1="0" y1="0" x2="1" y2="0">
          <stop offset="0" stopColor="#2a2a2a" />
          <stop offset="1" stopColor="#777" />
        </linearGradient>
        <linearGradient id="boot" x1="0" y1="0" x2="1" y2="1">
          <stop offset="0" stopColor="#333" />
          <stop offset=".5" stopColor="#0a0a0a" />
          <stop offset="1" stopColor="#555" />
        </linearGradient>
      </defs>
      {solids.map((points) => (
        <polygon key={points} points={points} />
      ))}
      <g fill="none" strokeWidth="3">
        <path d="M740 41v50" stroke="#f3f3f3" />
        <path d="M740 41L1418 285" stroke="url(#diagonal)" />
        <path d="M740 41L1350 49" stroke="url(#frame)" />
        <path d="M1350 49L1418 285 1403 472M1350 49L1387 285 1403 472M1350 49L1354 285M1350 49L1339 280" stroke="#222" />
        <path d="M1403 472L1199 468" stroke="#555" />
      </g>
      <g fill="none" strokeWidth="3" stroke="url(#wire)">
        <path d="M930 220L1090 167 1217 133 1170 220 960 275" />
        <path d="M965 270L985 205 1005 262 1036 189 1030 250 1074 174 1060 243 1111 160 1095 235 1146 152 1130 228 1187 142 1170 220" />
        <path d="M960 276L1418 285M1122 245L1220 215 1357 184 1387 285M1078 375L1100 340 1418 285M1000 300L1122 245" />
        <path d="M1122 245L1145 330 1155 240 1175 325 1189 230 1210 320 1222 215 1240 312 1256 208 1272 306 1290 200 1304 300 1323 192 1339 285 1357 184" />
        <path d="M1050 372L1270 377 1403 472M1418 285L1270 377 1220 466M1418 285L1290 375 1250 450" />
        <path d="M1268 440L1383 400 1387 330 1270 375M1280 435L1325 350 1300 425 1355 340 1328 415 1387 330 1355 405" />
      </g>
      <polygon points="1066,237 1095,219 1131,233 1139,280 1218,316 1223,330 1112,391 1078,380 1078,334 1100,312" fill="url(#boot)" />
      <polygon points="1232,344 1294,360 1258,468 1199,470" fill="url(#slab)" />
      <g stroke="#000" strokeWidth="3" fill="none">
        <path d="M1072 242L1131 233M1100 312L1122 250 1145 330M1100 335L1218 316M1078 375L1223 322M1175 325L1155 290" />
        <path d="M1220 466L1268 377 1290 365M1240 377H1270M1250 450L1285 375M1232 466L1275 377M1245 440L1280 380" />
      </g>
      <path d="M1060 775L1093 787 1088 885 1000 918M1020 870L1088 885" fill="none" stroke="#f0f0f0" strokeWidth="3" />
    </svg>
  );
}

// Faded facets drifting over the message box
function Ghosts() {
  return (
    <svg viewBox="0 0 1200 720" className="pointer-events-none absolute top-[111px] left-[79px] h-[240px] w-[400px] overflow-visible" aria-hidden="true">
      <defs>
        <radialGradient id="fade" gradientUnits="userSpaceOnUse" cx="1100" cy="540" r="500">
          <stop offset="0" stopColor="#fff" stopOpacity=".98" />
          <stop offset=".35" stopColor="#fff" stopOpacity=".75" />
          <stop offset="1" stopColor="#fff" stopOpacity="0" />
        </radialGradient>
        <linearGradient id="shard" x1="0" y1="0" x2="1" y2="0">
          <stop offset="0" stopColor="#666" />
          <stop offset="1" stopColor="#a5a5a5" />
        </linearGradient>
      </defs>
      <circle cx="1100" cy="540" r="500" fill="url(#fade)" />
      <g fill="#000">
        <polygon points="1050,207 1125,192 1154,235 1154,300 1116,333 1067,302" opacity=".09" />
        <polygon points="1070,425 1120,375 1149,402 1140,455 1070,460" opacity=".03" />
        <polygon points="1070,455 1140,455 1168,492 1140,552 1085,552 1070,520" opacity=".05" />
        <polygon points="890,480 955,465 975,500 985,570 960,595 905,580 885,540" opacity=".12" />
        <polygon points="975,478 1070,465 1085,552 985,570" opacity=".04" />
        <polygon points="862,640 908,580 960,595 893,705" opacity=".08" />
        <polygon points="960,595 985,570 1085,552 1060,680 1040,684" opacity=".07" />
        <polygon points="565,600 620,545 680,570 690,630 595,662" opacity=".02" />
        <polygon points="720,505 765,488 828,520 828,562 795,600 720,580" opacity=".04" />
        <polygon points="680,590 795,600 795,630 775,675 690,660" opacity=".03" />
        <polygon points="1085,552 1140,552 1140,678 1060,678" opacity=".02" />
        <polygon points="820,500 880,465 890,540 828,562" opacity=".04" />
      </g>
      <polygon points="828,562 885,560 908,580 855,648 795,625 795,600" fill="url(#shard)" />
    </svg>
  );
}

function SaveDialog() {
  return (
    <div
      role="dialog"
      aria-label="SOLIDWORKS"
      className="absolute top-[122px] left-[86px] flex h-[193px] w-[352px] flex-col border border-[#6b6b6b] bg-white text-black shadow-[0_4px_16px_rgba(0,0,0,0.35)]"
    >
      <div className="flex h-[29px] items-center justify-between pr-[10px] pl-2">
        <span>SOLIDWORKS</span>
        <button aria-label="Close">
          <svg viewBox="0 0 11 11" className="size-[11px]" stroke="#111" fill="none">
            <path d="M.5.500l10 10M10.500.5l-10 10" />
          </svg>
        </button>
      </div>
      <div className="flex flex-1 pt-[11px] pl-[10px]">
        <svg viewBox="0 0 32 32" className="size-[32px] shrink-0" aria-hidden="true">
          <path d="M16 .8L31.300 31.300H.7z" fill="#ffe100" stroke="#fbc02d" />
          <path d="M16 11v13M16 26.500v2.500" stroke="#111" strokeWidth="2.200" />
        </svg>
        <p className="mt-[5px] ml-[10px] text-[11px] leading-[15px] whitespace-pre">
          {"Triangles: 400\nFile Size: 20084 (Bytes)\nFile Format: Binary\n\nSave C:\\USERS\\54934\\ONEDRIVE\\ESCRITORIO\\COLA\nDE MILANO\\CURVA.STL?"}
        </p>
      </div>
      <div className="flex h-[41px] items-start justify-end gap-2 border-t border-[#dfdfdf] bg-[#f0f0f0] pt-[9px] pr-[11px]">
        <button className="h-[21px] w-[66px] border-2 border-[#0078d7] bg-[#e1e1e1] leading-[16px]">Sí</button>
        <button className="h-[21px] w-[66px] border border-[#adadad] bg-[#e1e1e1] leading-[18px]">No</button>
      </div>
    </div>
  );
}

type HudItem = { icon: string; drop?: boolean };

const hud: HudItem[] = [
  { icon: "zoomFit" },
  { icon: "zoomArea" },
  { icon: "prevView" },
  { icon: "section" },
  { icon: "annotView" },
  { icon: "orient", drop: true },
  { icon: "displayStyle", drop: true },
  { icon: "eye", drop: true },
  { icon: "editBall" },
  { icon: "scene", drop: true },
  { icon: "monitor", drop: true },
];

function Triad() {
  return (
    <svg viewBox="0 0 50 60" className="absolute bottom-[37px] left-[27px] h-[60px] w-[50px]" aria-hidden="true">
      <path d="M13 39V20" stroke="#1d6b1d" strokeWidth="3.500" />
      <path d="M13 11l4.500 11h-9z" fill="#2a9a2a" />
      <path d="M13 38l22 2" stroke="#d22" strokeWidth="3" />
      <path d="M43 41l-9 4v-8.500z" fill="#c01818" />
      <path d="M13 38l-4 9" stroke="#15157a" strokeWidth="4" />
      <circle cx="8.500" cy="47.500" r="4" fill="#1414b4" />
      <path d="M10 2l3 4 3-4M13 6v4" stroke="#0a8a0a" fill="none" />
      <path d="M44 37l5 9M49 37l-5 9" stroke="#f01010" />
      <path d="M3 49h4l-4 8h5" stroke="#1010f0" fill="none" />
    </svg>
  );
}

function Viewport() {
  return (
    <main className="relative col-start-2 row-span-2 row-start-1 flex min-w-0 overflow-hidden border-r-2 border-[#dfe3ea] bg-[#9e9fb1]">
      <div className="w-[126px] shrink-0" />
      <div className="relative flex-1 border border-dashed border-[#7c7c98] bg-white">
        <SaveDialog />
        <Ghosts />
        <Model />
      </div>
      <div className="w-[381px] shrink-0" />

      <div className="absolute inset-x-0 top-[6px] flex justify-center gap-2 pr-1">
        {hud.map((item) => (
          <span key={item.icon} className="flex items-center gap-[9px]">
            <button aria-label={item.icon}>
              <Icon name={item.icon} />
            </button>
            {item.drop && <Caret className="text-[#999]" />}
          </span>
        ))}
      </div>

      <div className="absolute top-[6px] right-[11px] flex items-center text-[#737384]">
        <button aria-label="Dock left" className="mr-2"><Icon name="dockLeft" /></button>
        <button aria-label="Dock right" className="mr-[10px]"><Icon name="dockRight" /></button>
        <WindowButtons />
      </div>

      <button
        aria-label="Collapse panel"
        className="absolute top-[427px] left-0 flex h-[39px] w-[8px] items-center justify-center border border-l-0 border-[#858585] bg-[#f7f7f7]"
      >
        <span className="size-[6px] shrink-0 rounded-full border border-[#888] bg-[#ccc]" />
      </button>

      <Triad />
      <span className="absolute bottom-[2px] left-[11px] font-['Inter'] text-[13px] leading-[16px] font-extrabold text-[#1a1a1a]">Camera1</span>
    </main>
  );
}

function TaskPane() {
  return (
    <div className="absolute top-[50px] right-0 z-10 flex w-[26px] flex-col border-t border-l border-[#858585]">
      {["home", "library", "explorer", "palette", "ball", "list"].map((name) => (
        <button
          key={name}
          aria-label={name}
          className={`flex h-6 items-center justify-center border-b border-[#858585] ${name === "ball" ? "bg-white" : "bg-[#d3d3d3]"}`}
        >
          <Icon name={name} />
        </button>
      ))}
    </div>
  );
}

function SheetTabs() {
  return (
    <div className="flex h-[16px] shrink-0 border-t border-[#858585] bg-[#f7f7f7] pl-[27px] whitespace-nowrap text-[#222]">
      <div className="flex border-r border-[#858585]">
        {["M5 3v8M11 3L6 7l5 4z", "M10 3L5 7l5 4z", "M6 3l5 4-5 4z", "M11 3v8M5 3l5 4-5 4z"].map((d) => (
          <button key={d} aria-label="Navigate sheets" className="w-[16px] border-l border-[#858585] bg-[#b5b5b5]">
            <svg viewBox="0 0 16 14" className="h-[14px] w-[15px]" fill="#8c8c8c" stroke="#8c8c8c">
              <path d={d} />
            </svg>
          </button>
        ))}
      </div>
      <button className="w-[56px] pl-[2px] leading-[12px] font-bold text-black">Model</button>
      <button className="w-[69px] border-x border-b border-[#858585] bg-[#d3d3d3] leading-[12px]">3D Views</button>
      <button className="w-[108px] border-r border-b border-[#858585] bg-[#d3d3d3] pr-1 leading-[12px]">Motion Study 1</button>
    </div>
  );
}

const selectionFilters = [
  "point", "edge", "face", "surface", "solid", "axis", "refPlane", "sketchPoint", "sketch",
  "segment", "midpoint", "centermark", "centerline", "dimension", "finish", "geoTol", "balloon",
  "datum", "weld", "weldBead", "datumTarget", "thread", "block", "gravity", "routeEnd", "routeMid",
];

function FilterToolbar() {
  return (
    <div className="flex h-[32px] shrink-0 bg-[#f7f7f7]">
      <div className="flex items-center border-r border-[#858585] pt-px pr-[11px] pl-[3px]">
        <Grip />
        <div className="ml-3 flex gap-[9px]">
          {["filterOne", "filterMany", "filterActive"].map((name) => (
            <button key={name} aria-label={name}>
              <Icon name={name} />
            </button>
          ))}
        </div>
        <div className="ml-1 flex h-[26px] border border-[#8a8a8a]">
          <button aria-label="Select" className="flex w-[28px] items-center justify-center bg-[#b1b1b1]">
            <Icon name="cursor" />
          </button>
          <button aria-label="Select options" className="flex w-[12px] items-center justify-center border-l border-[#8a8a8a]">
            <Caret />
          </button>
        </div>
        <button aria-label="Select over geometry" className="ml-1">
          <Icon name="cursorStack" />
        </button>
        <span className="ml-[7px] h-[22px] w-px bg-[#858585]" />
        <div className="ml-[11px] flex gap-[9px]">
          {selectionFilters.map((name) => (
            <button key={name} aria-label={`Filter ${name}`} className="relative">
              <Icon name={name} />
              <svg viewBox="0 0 6 7" className="absolute -right-px bottom-0 h-[7px] w-[6px]" aria-hidden="true">
                <path d="M0 0h6v2L4 4v3H2V4L0 2z" fill="#9a5bb5" />
              </svg>
            </button>
          ))}
        </div>
      </div>
    </div>
  );
}

function StatusBar() {
  return (
    <footer className="flex h-[21px] shrink-0 items-center border-t border-[#858585] bg-[#e5e5e5] pl-px text-[11px] whitespace-nowrap text-[#111]">
      <span>SOLIDWORKS Premium 2017 x64 Edition</span>
      <span className="ml-auto w-[82px]">Under Defined</span>
      <span className="h-4 w-[9px] border-x border-[#cfcfcf]" />
      <span className="w-[100px] pl-[3px]">Editing Assembly</span>
      <span className="h-4 w-[17px] border-x border-[#cfcfcf]" />
      <span className="w-[86px] pl-[31px]">MMGS</span>
      <svg viewBox="0 0 5 3" className="h-[3px] w-[5px]" aria-hidden="true">
        <path d="M0 3h5L2.500 0z" fill="#404040" />
      </svg>
      <button aria-label="Tags" className="mr-[3px] ml-[67px]">
        <Icon name="tag" className="size-[17px]" />
      </button>
    </footer>
  );
}

export default function App() {
  return (
    <div className="flex h-screen flex-col overflow-hidden bg-[#f7f7f7] font-['Open_Sans','Noto_Sans',sans-serif] text-[12px] leading-[16px] text-[#111]">
      <TitleBar />
      <Ribbon />
      <div className="relative grid min-h-0 flex-1 grid-cols-[254px_1fr] grid-rows-[22px_1fr]">
        <Viewport />
        <CommandTabs />
        <SidePanel />
        <TaskPane />
      </div>
      <SheetTabs />
      <FilterToolbar />
      <StatusBar />
    </div>
  );
}
